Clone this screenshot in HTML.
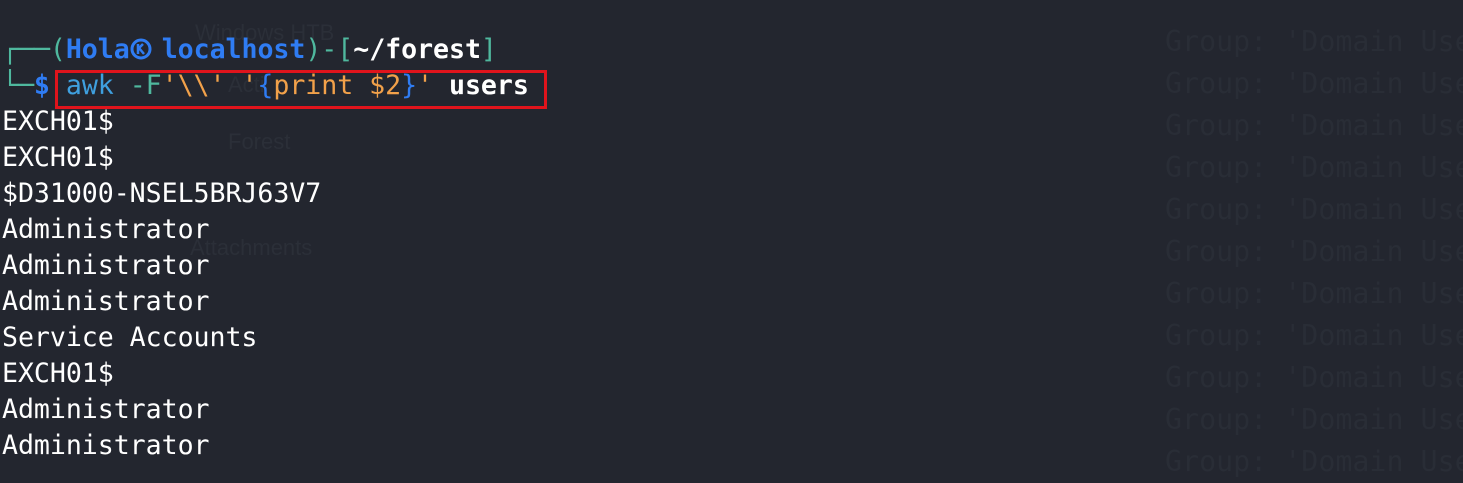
<!DOCTYPE html>
<html><head><meta charset="utf-8"><style>
html,body{margin:0;padding:0;width:1463px;height:433px;overflow:hidden;background:#23262f}
.t{position:absolute;left:2px;top:32px;font-family:"DejaVu Sans Mono",monospace;font-size:26.6px;line-height:36px;color:#fff;white-space:pre;letter-spacing:-0.05px}
.f{position:absolute;font-family:"Liberation Sans",sans-serif;font-size:22px;color:#2b2f38}
.g{position:absolute;left:1165px;top:21px;font-family:"DejaVu Sans Mono",monospace;font-size:28.3px;line-height:42px;color:#292d36;white-space:pre}
.tl{color:#4fb89e}.bl{color:#2f7cf3;font-weight:bold}.aw{color:#3fa0df}.or{color:#f2a14a}.br{color:#2f7cf3}.w{font-weight:bold}
.box{position:absolute;left:55px;top:70px;width:486px;height:33px;border:3px solid #e0141c}
</style></head><body>
<div class="f" style="left:195px;top:20px">Windows HTB</div>
<div class="f" style="left:228px;top:72px">Acti</div>
<div class="f" style="left:228px;top:129px">Forest</div>
<div class="f" style="left:190px;top:235px">Attachments</div>
<div class="g">Group: 'Domain Users'
Group: 'Domain Users'
Group: 'Domain Users'
Group: 'Domain Users'
Group: 'Domain Users'
Group: 'Domain Users'
Group: 'Domain Users'
Group: 'Domain Users'
Group: 'Domain Users'
Group: 'Domain Users'
Group: 'Domain Users'</div>
<div class="box"></div>
<div class="t"><span class="tl">┌──(</span><span class="bl">Hola</span><svg width="32" height="24" viewBox="0 0 32 24" style="vertical-align:-3px"><circle cx="11" cy="12" r="9" fill="none" stroke="#2f7cf3" stroke-width="3"/><path d="M8 7v10M8 12l5-5M9 11l5 6" stroke="#2f7cf3" stroke-width="2.5" fill="none"/></svg><span class="bl">localhost</span><span class="tl">)-[</span><span class="w">~/forest</span><span class="tl">]</span>
<span class="tl">└─</span><span class="bl">$</span> <span class="aw">awk</span> <span class="tl">-F</span><span class="or">'\\'</span> <span class="or">'</span><span class="br">{</span><span class="or">print $2</span><span class="br">}</span><span class="or">'</span> <span class="w">users</span>
EXCH01$
EXCH01$
$D31000-NSEL5BRJ63V7
Administrator
Administrator
Administrator
Service Accounts
EXCH01$
Administrator
Administrator</div>
</body></html>
